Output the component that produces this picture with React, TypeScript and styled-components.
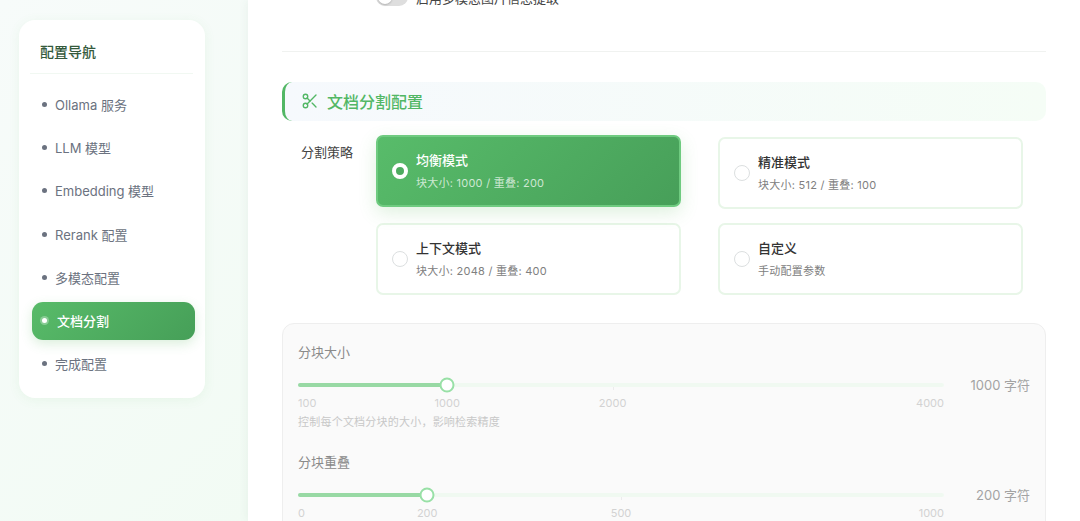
import * as React from 'react';
import styled, { createGlobalStyle } from 'styled-components';

const FONT = `Inter, "Noto Sans CJK SC", sans-serif`;

const NAV_ITEMS = ['Ollama 服务', 'LLM 模型', 'Embedding 模型', 'Rerank 配置', '多模态配置', '文档分割', '完成配置'];

const STRATEGIES = [
  { title: '均衡模式', desc: '块大小: 1000 / 重叠: 200', selected: true },
  { title: '精准模式', desc: '块大小: 512 / 重叠: 100', selected: false },
  { title: '上下文模式', desc: '块大小: 2048 / 重叠: 400', selected: false },
  { title: '自定义', desc: '手动配置参数', selected: false },
];

const Scissors = () => (
  <svg width="18" height="18" viewBox="0 0 24 24" fill="none" stroke="#52b765" strokeWidth="1.8" strokeLinecap="round" strokeLinejoin="round">
    <circle cx="6" cy="6" r="3" />
    <path d="M8.12 8.12 12 12" />
    <path d="M20 4 8.12 15.88" />
    <circle cx="6" cy="18" r="3" />
    <path d="M14.8 14.8 20 20" />
  </svg>
);

interface SliderProps {
  label: string;
  value: string;
  percent: number;
  marks: { text: string; at: number }[];
  hint?: string;
}

const SliderBlock: React.FC<SliderProps> = ({ label, value, percent, marks, hint }) => (
  <SliderItem>
    <SliderLabel>{label}</SliderLabel>
    <SliderRow>
      <SliderBody>
        <Track>
          <Fill $percent={percent} />
          {marks.slice(1, -1).map((m) =>
            m.at !== percent ? <Tick key={m.text} $at={m.at} /> : null,
          )}
          <Thumb $percent={percent} />
        </Track>
        <Marks>
          {marks.map((m) => (
            <Mark key={m.text} $at={m.at}>
              {m.text}
            </Mark>
          ))}
        </Marks>
      </SliderBody>
      <SliderValue>{value}</SliderValue>
    </SliderRow>
    {hint ? <Hint>{hint}</Hint> : null}
  </SliderItem>
);

const App: React.FC = () => (
  <Page>
    <GlobalStyle />
    <Sidebar>
      <NavCard>
        <NavTitle>配置导航</NavTitle>
        <NavList>
          {NAV_ITEMS.map((item) => (
            <NavItem key={item} $active={item === '文档分割'}>
              <NavDot $active={item === '文档分割'} />
              {item}
            </NavItem>
          ))}
        </NavList>
      </NavCard>
    </Sidebar>
    <Main>
      <ToggleRow>
        <Toggle>
          <ToggleKnob />
        </Toggle>
        <ToggleText>启用多模态图片信息提取</ToggleText>
      </ToggleRow>
      <Divider />
      <SectionHeader>
        <Scissors />
        <SectionTitle>文档分割配置</SectionTitle>
      </SectionHeader>
      <StrategyRow>
        <StrategyLabel>分割策略</StrategyLabel>
        <StrategyGrid>
          {STRATEGIES.map((s) => (
            <StrategyCard key={s.title} $selected={s.selected}>
              <Radio $selected={s.selected} />
              <div>
                <StrategyTitle $selected={s.selected}>{s.title}</StrategyTitle>
                <StrategyDesc $selected={s.selected}>{s.desc}</StrategyDesc>
              </div>
            </StrategyCard>
          ))}
        </StrategyGrid>
      </StrategyRow>
      <Panel>
        <SliderBlock
          label="分块大小"
          value="1000 字符"
          percent={23.1}
          marks={[
            { text: '100', at: 0 },
            { text: '1000', at: 23.1 },
            { text: '2000', at: 48.7 },
            { text: '4000', at: 100 },
          ]}
          hint="控制每个文档分块的大小，影响检索精度"
        />
        <SliderBlock
          label="分块重叠"
          value="200 字符"
          percent={20}
          marks={[
            { text: '0', at: 0 },
            { text: '200', at: 20 },
            { text: '500', at: 50 },
            { text: '1000', at: 100 },
          ]}
        />
      </Panel>
    </Main>
  </Page>
);

export default App;

const GlobalStyle = createGlobalStyle`
  html, body {
    margin: 0;
    padding: 0;
    height: 100%;
    overflow: hidden;
    font-family: ${FONT};
  }
  #root {
    height: 100%;
  }
`;

const Page = styled.div`
  display: flex;
  width: 1080px;
  height: 521px;
  overflow: hidden;
  background: #fff;
`;

const Sidebar = styled.aside`
  box-sizing: border-box;
  width: 248px;
  flex-shrink: 0;
  padding: 20px 43px 0 19px;
  background: linear-gradient(135deg, #f7fbfa 0%, #f2fbf4 100%);
`;

const NavCard = styled.div`
  box-sizing: border-box;
  height: 378px;
  padding: 0 10px 0 13px;
  background: #fff;
  border-radius: 16px;
  box-shadow: 0 2px 12px rgba(76, 175, 80, 0.08);
`;

const NavTitle = styled.div`
  box-sizing: border-box;
  height: 54px;
  margin-left: -2px;
  margin-right: 2px;
  padding: 23px 0 0 10px;
  font-size: 14px;
  line-height: 18px;
  font-weight: 500;
  color: #345a3c;
  border-bottom: 1px solid #f1f8f2;
`;

const NavList = styled.div`
  display: flex;
  flex-direction: column;
  gap: 5.2px;
  margin-top: 11.6px;
`;

const NavItem = styled.div<{ $active: boolean }>`
  display: flex;
  align-items: center;
  height: 38px;
  padding-left: 10px;
  border-radius: 11px;
  font-size: 13px;
  font-weight: ${(p) => (p.$active ? 500 : 400)};
  color: ${(p) => (p.$active ? '#fff' : '#6b7280')};
  background: ${(p) => (p.$active ? 'linear-gradient(135deg, #58bb69 0%, #469f58 100%)' : 'transparent')};
  box-shadow: ${(p) => (p.$active ? '0 4px 12px rgba(76, 175, 80, 0.2)' : 'none')};
`;

const NavDot = styled.span<{ $active: boolean }>`
  width: 5px;
  height: 5px;
  margin-right: ${(p) => (p.$active ? 10 : 8)}px;
  border-radius: 50%;
  background: ${(p) => (p.$active ? '#fff' : '#6b7280')};
  box-shadow: ${(p) => (p.$active ? '0 0 0 2px rgba(255, 255, 255, 0.3)' : 'none')};
`;

const Main = styled.main`
  box-sizing: border-box;
  flex: 1;
  min-width: 0;
  padding: 0 34px;
  background: #fff;
  box-shadow: -2px 0 8px rgba(60, 120, 80, 0.06);
`;

const ToggleRow = styled.div`
  display: flex;
  align-items: center;
  gap: 8px;
  height: 20px;
  margin-top: -13px;
  padding-left: 94px;
`;

const Toggle = styled.div`
  position: relative;
  width: 32px;
  height: 18px;
  border-radius: 9px;
  background: #dedede;
`;

const ToggleKnob = styled.span`
  position: absolute;
  top: 2px;
  left: 2px;
  width: 14px;
  height: 14px;
  border-radius: 50%;
  background: #fff;
  box-shadow: 0 1px 2px rgba(0, 0, 0, 0.2);
`;

const ToggleText = styled.span`
  font-size: 13px;
  color: #444;
`;

const Divider = styled.div`
  height: 1px;
  margin-top: 44px;
  background: #f0f2f0;
`;

const SectionHeader = styled.div`
  box-sizing: border-box;
  display: flex;
  align-items: center;
  gap: 8px;
  height: 39px;
  margin-top: 30px;
  padding: 0 0 1px 16px;
  border-left: 3px solid #52b765;
  border-radius: 10px;
  background: linear-gradient(90deg, #f6f9fd 0%, #f5fdf6 100%);
`;

const SectionTitle = styled.h3`
  margin: 0;
  font-size: 16px;
  font-weight: 500;
  color: #52b765;
`;

const StrategyRow = styled.div`
  display: flex;
  margin-top: 16px;
`;

const StrategyLabel = styled.div`
  width: 94px;
  flex-shrink: 0;
  padding: 6px 0 0 19px;
  box-sizing: border-box;
  font-size: 13px;
  line-height: 18px;
  color: #444;
`;

const StrategyGrid = styled.div`
  display: grid;
  grid-template-columns: 305px 305px;
  column-gap: 37px;
  row-gap: 14px;
`;

const StrategyCard = styled.div<{ $selected: boolean }>`
  box-sizing: border-box;
  display: flex;
  align-items: center;
  gap: 8px;
  height: 72px;
  padding-left: 14px;
  border: 2px solid ${(p) => (p.$selected ? '#6fcb80' : '#e8f6e8')};
  border-radius: 7px;
  background: ${(p) => (p.$selected ? 'linear-gradient(135deg, #58bc6a 0%, #479f59 100%)' : '#fff')};
  box-shadow: ${(p) => (p.$selected ? '0 6px 18px rgba(76, 175, 80, 0.18)' : 'none')};
  transform: ${(p) => (p.$selected ? 'translateY(-2px)' : 'none')};
`;

const Radio = styled.span<{ $selected: boolean }>`
  box-sizing: border-box;
  flex-shrink: 0;
  width: 16px;
  height: 16px;
  border-radius: 50%;
  border: ${(p) => (p.$selected ? '4px solid #fff' : '1px solid #dcdfe0')};
  background: ${(p) => (p.$selected ? '#4dab5f' : '#fff')};
`;

const StrategyTitle = styled.div<{ $selected: boolean }>`
  font-size: 13px;
  line-height: 18px;
  font-weight: 500;
  color: ${(p) => (p.$selected ? '#fff' : '#333')};
`;

const StrategyDesc = styled.div<{ $selected: boolean }>`
  margin-top: 6px;
  font-size: 11px;
  line-height: 16px;
  letter-spacing: 0.25px;
  color: ${(p) => (p.$selected ? 'rgba(255, 255, 255, 0.72)' : '#808080')};
`;

const Panel = styled.section`
  box-sizing: border-box;
  height: 260px;
  margin-top: 28px;
  padding: 19px 15px 0;
  background: #fafafa;
  border: 1px solid #eeeeee;
  border-radius: 12px;
`;

const SliderItem = styled.div`
  height: 110px;
`;

const SliderLabel = styled.div`
  font-size: 13px;
  line-height: 18px;
  color: #8a8a8a;
`;

const SliderRow = styled.div`
  display: flex;
  align-items: flex-start;
  margin-top: 22px;
`;

const SliderBody = styled.div`
  width: 646px;
  flex-shrink: 0;
`;

const Track = styled.div`
  position: relative;
  height: 4px;
  border-radius: 2px;
  background: #f0f9f1;
`;

const Fill = styled.div<{ $percent: number }>`
  width: ${(p) => p.$percent}%;
  height: 100%;
  border-radius: 2px;
  background: #98d9a4;
`;

const Tick = styled.span<{ $at: number }>`
  position: absolute;
  left: ${(p) => p.$at}%;
  top: 4px;
  width: 1px;
  height: 3px;
  background: #ececec;
`;

const Thumb = styled.span<{ $percent: number }>`
  position: absolute;
  box-sizing: border-box;
  left: ${(p) => p.$percent}%;
  top: 50%;
  width: 15px;
  height: 15px;
  border-radius: 50%;
  border: 2px solid #98e0a6;
  background: #fff;
  transform: translate(-50%, -50%);
`;

const Marks = styled.div`
  position: relative;
  height: 14px;
  margin-top: 9px;
`;

const Mark = styled.span<{ $at: number }>`
  position: absolute;
  left: ${(p) => p.$at}%;
  top: 0;
  font-size: 11px;
  line-height: 14px;
  color: #d2d2d2;
  transform: translateX(
    ${(p) => (p.$at === 0 ? '0' : p.$at === 100 ? '-100%' : '-50%')}
  );
`;

const SliderValue = styled.div`
  flex: 1;
  margin-top: -7px;
  font-size: 13px;
  line-height: 18px;
  text-align: right;
  color: #a3a3a3;
`;

const Hint = styled.div`
  margin-top: 4px;
  font-size: 11px;
  line-height: 16px;
  letter-spacing: 0.22px;
  color: #c8c8c8;
`;
